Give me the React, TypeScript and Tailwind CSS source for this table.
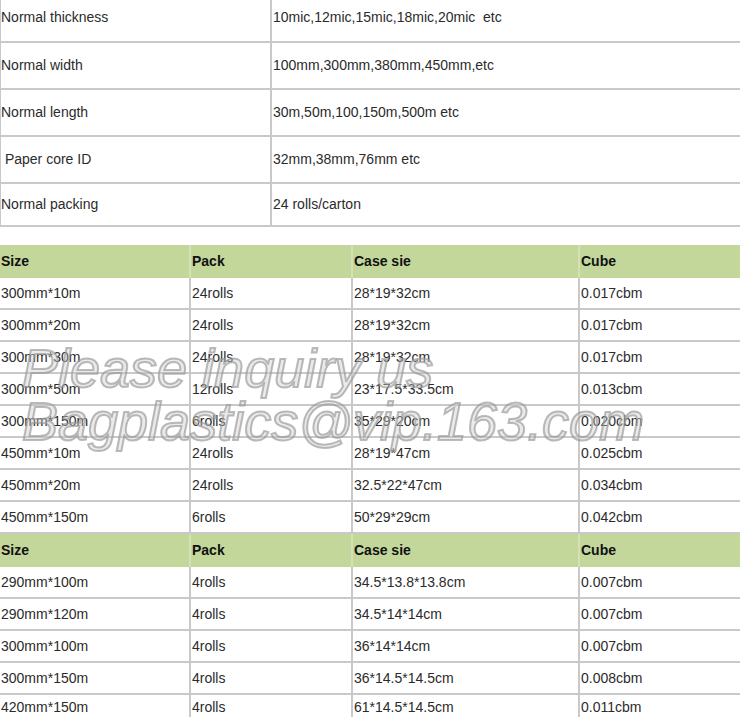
import React from "react";

const spec: [string, string][] = [
  ["Normal thickness", "10mic,12mic,15mic,18mic,20mic  etc"],
  ["Normal width", "100mm,300mm,380mm,450mm,etc"],
  ["Normal length", "30m,50m,100,150m,500m etc"],
  ["\u00a0Paper core ID", "32mm,38mm,76mm etc"],
  ["Normal packing", "24 rolls/carton"],
];

const part1: string[][] = [
  ["300mm*10m", "24rolls", "28*19*32cm", "0.017cbm"],
  ["300mm*20m", "24rolls", "28*19*32cm", "0.017cbm"],
  ["300mm*30m", "24rolls", "28*19*32cm", "0.017cbm"],
  ["300mm*50m", "12rolls", "23*17.5*33.5cm", "0.013cbm"],
  ["300mm*150m", "6rolls", "35*29*20cm", "0.020cbm"],
  ["450mm*10m", "24rolls", "28*19*47cm", "0.025cbm"],
  ["450mm*20m", "24rolls", "32.5*22*47cm", "0.034cbm"],
  ["450mm*150m", "6rolls", "50*29*29cm", "0.042cbm"],
];

const part2: string[][] = [
  ["290mm*100m", "4rolls", "34.5*13.8*13.8cm", "0.007cbm"],
  ["290mm*120m", "4rolls", "34.5*14*14cm", "0.007cbm"],
  ["300mm*100m", "4rolls", "36*14*14cm", "0.007cbm"],
  ["300mm*150m", "4rolls", "36*14.5*14.5cm", "0.008cbm"],
  ["420mm*150m", "4rolls", "61*14.5*14.5cm", "0.011cbm"],
];

function HeaderRow() {
  return (
    <div className="grid h-[33px] grid-cols-[191px_162px_227px_1fr] bg-[#c4d79b] font-bold text-[#111]">
      <div className="flex items-center border-r-2 border-[#d4e1b8] pl-[1px]">Size</div>
      <div className="flex items-center border-r-2 border-[#d4e1b8] pl-[1px]">Pack</div>
      <div className="flex items-center border-r-2 border-[#d4e1b8] pl-[1px]">Case sie</div>
      <div className="flex items-center pl-[1px]">Cube</div>
    </div>
  );
}

function BodyRow({ r, last }: { r: string[]; last?: boolean }) {
  return (
    <div
      className={
        last
          ? "grid h-[26px] grid-cols-[191px_162px_227px_1fr] border-b-2 border-[#c9c9c9]"
          : "grid h-[32px] grid-cols-[191px_162px_227px_1fr] border-b-2 border-[#c9c9c9]"
      }
    >
      <div className="flex items-center border-r-2 border-[#c9c9c9] pl-[1px]">{r[0]}</div>
      <div className="flex items-center border-r-2 border-[#c9c9c9] pl-[1px]">{r[1]}</div>
      <div className="flex items-center border-r-2 border-[#c9c9c9] pl-[1px]">{r[2]}</div>
      <div className="flex items-center pl-[1px]">{r[3]}</div>
    </div>
  );
}

export default function App() {
  return (
    <div className="relative h-[717px] w-[740px] overflow-hidden bg-white font-['Liberation_Sans',Arial,sans-serif] text-[14px] text-[#2b2b2b]">
      <div className="-mt-[6px] border-l border-[#c9c9c9]">
        {spec.map(([k, v], i) => (
          <div
            key={i}
            className={
              i === 4
                ? "grid h-[43px] grid-cols-[271px_1fr] border-b-2 border-[#c9c9c9]"
                : i === 0
                ? "grid h-[49px] grid-cols-[271px_1fr] border-b-2 border-[#c9c9c9]"
                : "grid h-[47px] grid-cols-[271px_1fr] border-b-2 border-[#c9c9c9]"
            }
          >
            <div className="flex items-center border-r-2 border-[#c9c9c9] whitespace-pre">{k}</div>
            <div className="flex items-center pl-[1px] whitespace-pre">{v}</div>
          </div>
        ))}
      </div>

      <div className="mt-[18px]">
        <HeaderRow />
        {part1.map((r, i) => (
          <BodyRow key={i} r={r} />
        ))}
        <HeaderRow />
        {part2.map((r, i) => (
          <BodyRow key={i} r={r} last={i === part2.length - 1} />
        ))}
      </div>

      <div className="pointer-events-none absolute left-[22px] top-[342px] whitespace-nowrap font-['Liberation_Sans',Arial,sans-serif] text-[54px] italic leading-[53px] text-[rgba(200,200,200,0.38)] [-webkit-text-stroke:2px_rgba(150,150,150,0.65)]">
        <div>Please inquiry us</div>
        <div>Bagplastics@vip.163.com</div>
      </div>
    </div>
  );
}
